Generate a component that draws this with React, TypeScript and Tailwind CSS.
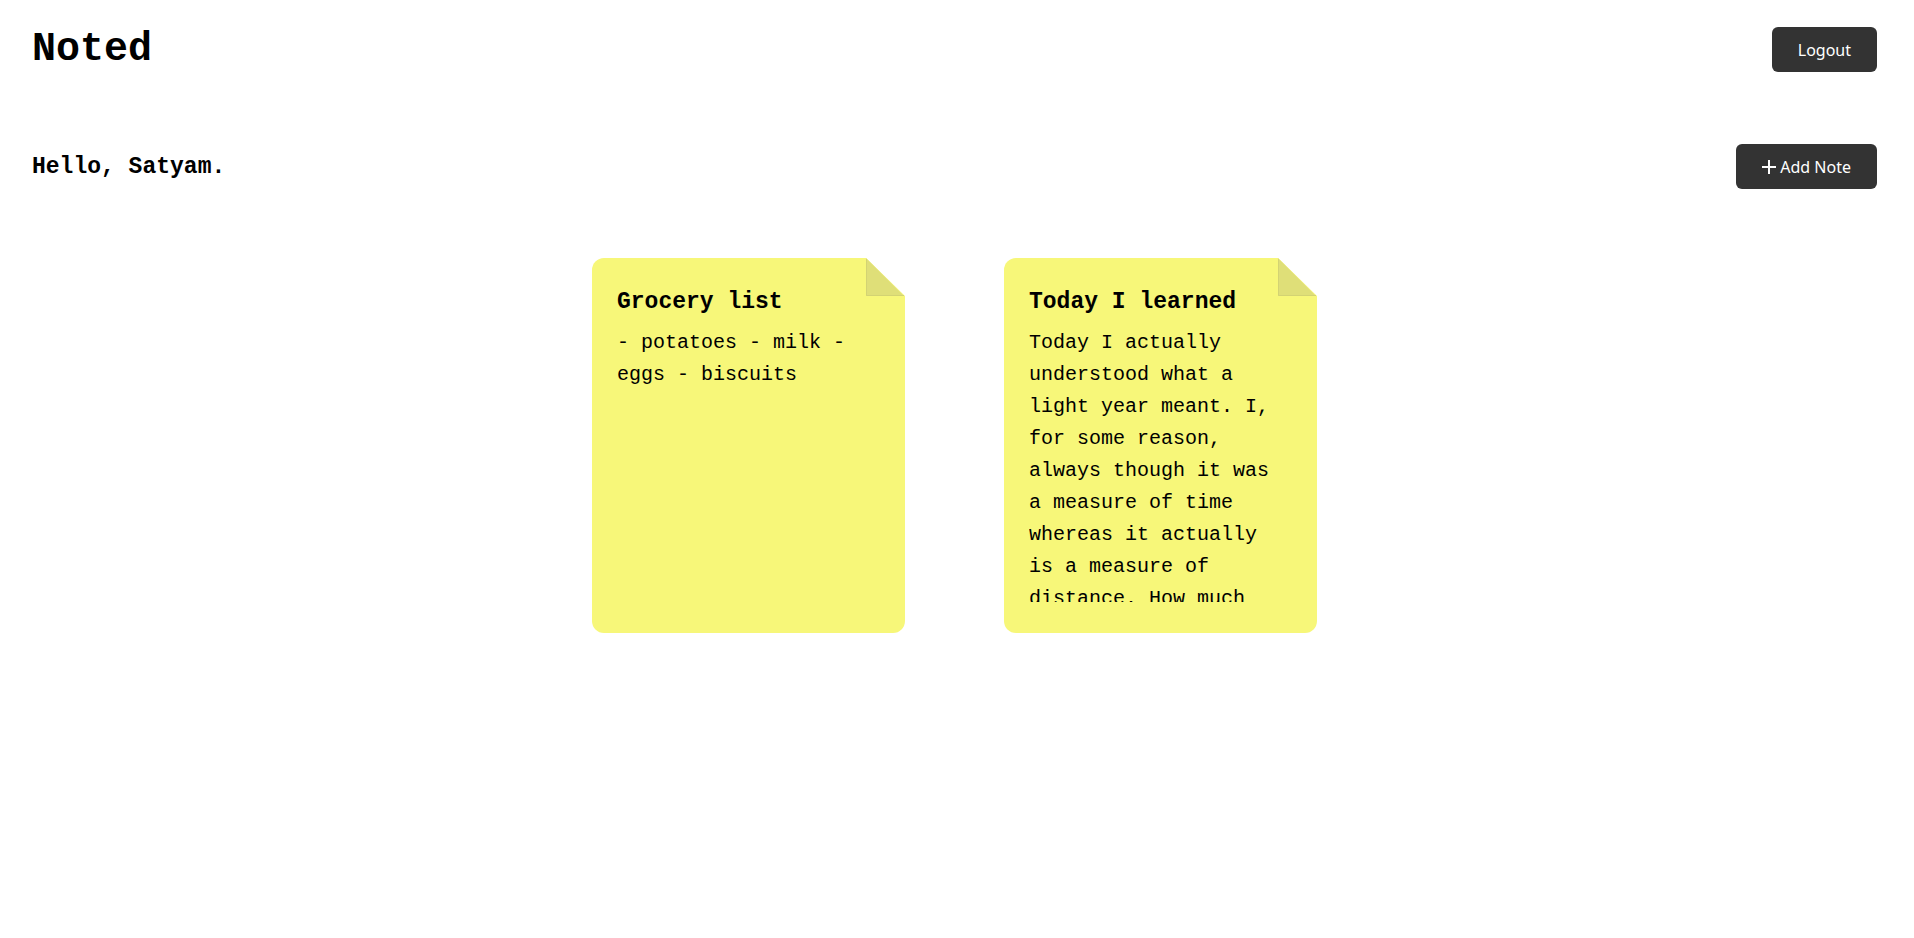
import type { ReactNode } from 'react';

type Note = { title: string; body: string };

const notes: Note[] = [
  { title: 'Grocery list', body: '- potatoes - milk - eggs - biscuits' },
  {
    title: 'Today I learned',
    body: 'Today I actually understood what a light year meant. I, for some reason, always though it was a measure of time whereas it actually is a measure of distance. How much',
  },
];

function Button({ children }: { children: ReactNode }) {
  return (
    <button
      type="button"
      className="flex h-[45px] items-center gap-1 rounded-md bg-[#333333] px-[26px] font-['Noto_Sans',sans-serif] text-base text-white"
    >
      {children}
    </button>
  );
}

function PlusIcon() {
  return (
    <svg className="h-4 w-[14px]" viewBox="0 0 14 16" fill="none" stroke="currentColor" strokeWidth="2" aria-hidden="true">
      <path d="M7 1v14M0 8h14" />
    </svg>
  );
}

function NoteCard({ title, body }: Note) {
  return (
    <article className="relative h-[375px] w-[313px] rounded-xl bg-[#f7f779] px-[25px] pt-7 pb-[31px]">
      <svg className="absolute top-0 right-0 h-[39px] w-[39px]" viewBox="0 0 39 39" aria-hidden="true">
        <path d="M0 0H39V38Z" fill="white" />
        <path d="M0 0L38 38H0Z" fill="#dfdf78" />
        <path d="M0.5 1V37.5H38" fill="none" stroke="#d3d373" />
      </svg>
      <div className="flex h-full flex-col overflow-hidden">
        <h3 className="text-[23px] leading-8 font-bold">{title}</h3>
        <p className="mt-[9px] text-xl leading-8">{body}</p>
      </div>
    </article>
  );
}

export default function App() {
  return (
    <div className="min-h-screen bg-white pt-[27px] pr-[37px] pl-8 font-['Liberation_Mono',monospace] text-black">
      <header className="flex items-center justify-between">
        <h1 className="text-[40px] leading-10 font-bold">Noted</h1>
        <Button>Logout</Button>
      </header>
      <main>
        <div className="mt-[72px] flex items-center justify-between">
          <h2 className="text-[23px] leading-8 font-bold">Hello, Satyam.</h2>
          <Button>
            <PlusIcon />
            Add Note
          </Button>
        </div>
        <section className="mt-[69px] flex flex-wrap justify-center gap-[99px]" aria-label="Notes">
          {notes.map((note) => (
            <NoteCard key={note.title} {...note} />
          ))}
        </section>
      </main>
    </div>
  );
}
